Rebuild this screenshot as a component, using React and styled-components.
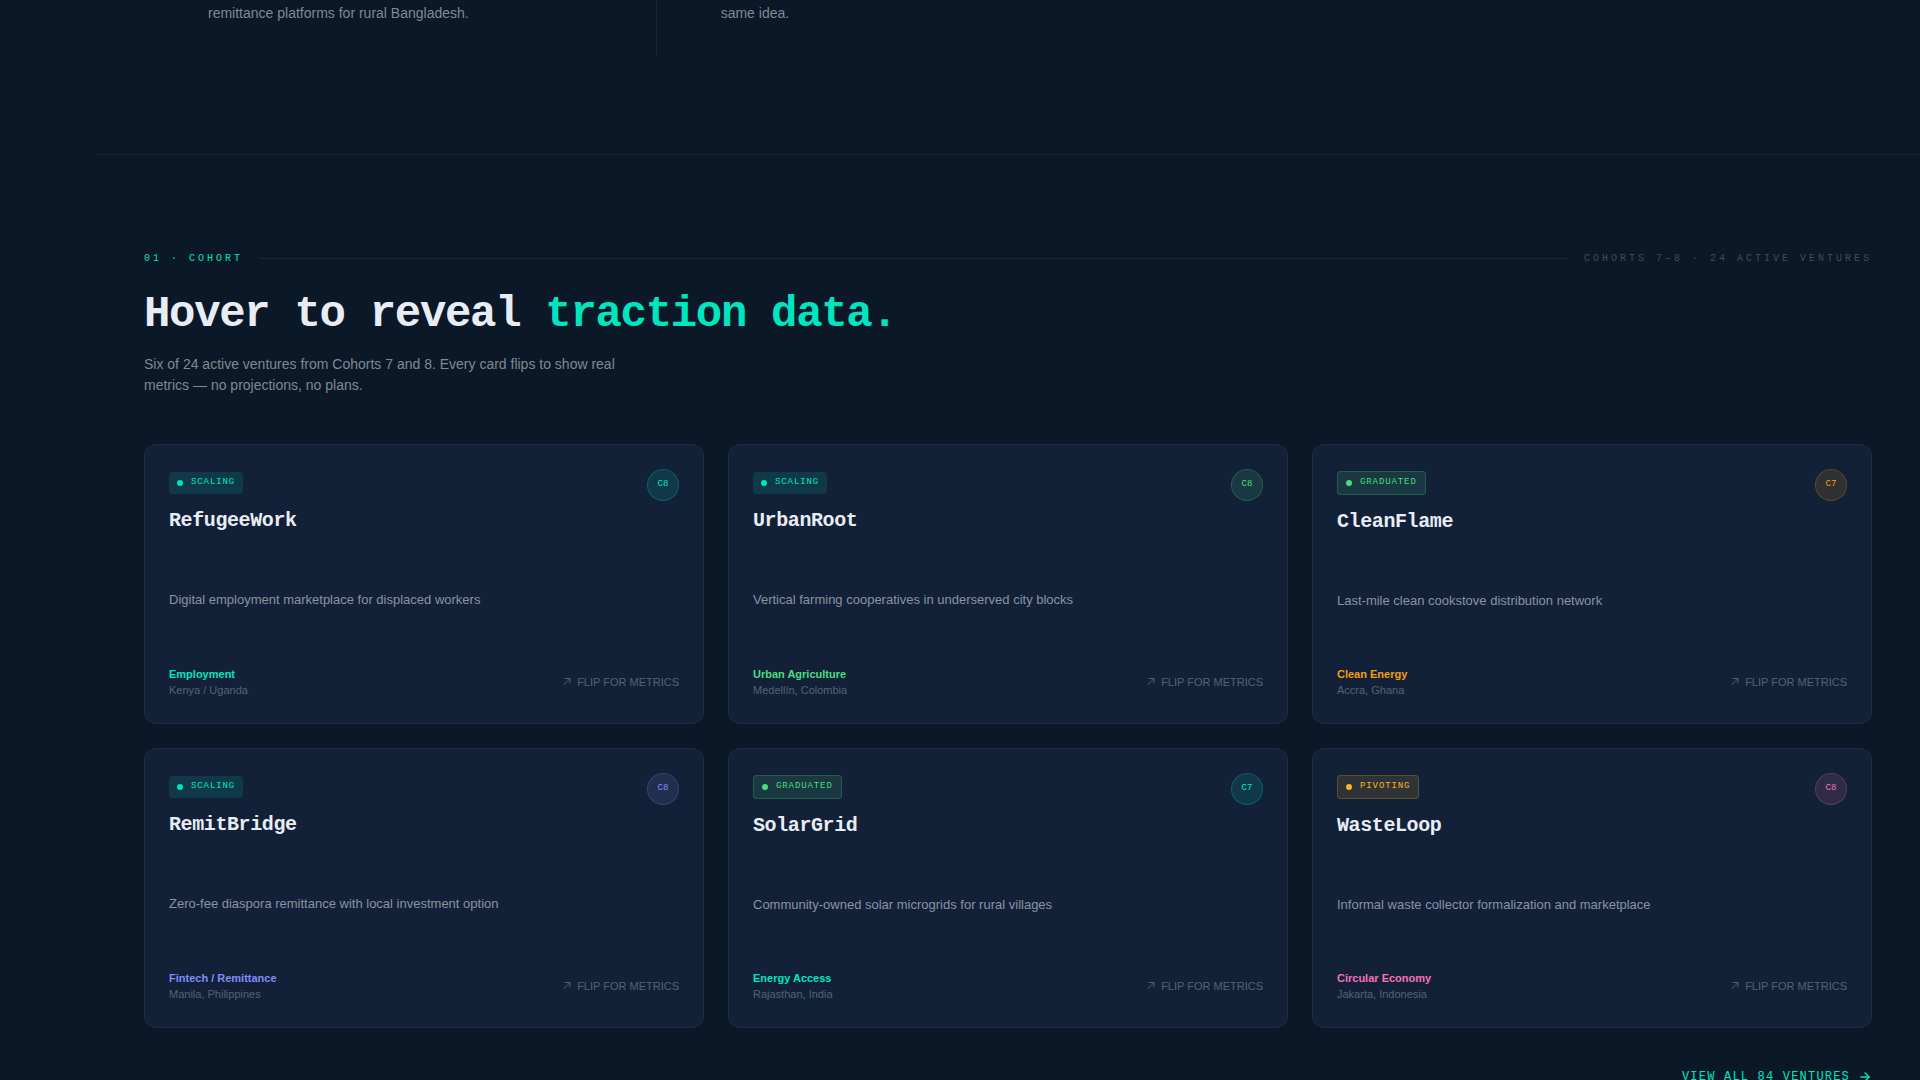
import React from 'react';
import styled, { createGlobalStyle } from 'styled-components';
import { ArrowRight } from 'lucide-react';

const GlobalStyle = createGlobalStyle`
  :root {
    --bg: #0b1827;
    --card: #132138;
    --line: #172431;
    --card-line: #202d43;
    --text: #e8edf5;
    --muted: #7f8996;
    --dim: #556173;
    --faint: #404b5b;
    --teal: #00e5c0;
    --sans: 'Liberation Sans', Arial, sans-serif;
    --mono: 'Liberation Mono', 'Courier New', monospace;
  }

  * {
    box-sizing: border-box;
    margin: 0;
  }

  body {
    background: var(--bg);
    color: var(--text);
    font-family: var(--sans);
  }
`;

const Page = styled.main`
  height: 100vh;
  overflow: hidden;
  padding-left: 96px;
`;

const Ideas = styled.section`
  padding: 0 48px 98px;
`;

const IdeaGrid = styled.div`
  display: grid;
  grid-template-columns: repeat(3, 1fr);
  max-width: 1538px;
`;

const Idea = styled.p`
  padding: 0 64px 30px;
  border-right: 1px solid
    ${({ $divided }) => ($divided ? 'var(--line)' : 'transparent')};
  color: var(--muted);
  font-size: 14px;
  line-height: 26px;
`;

const Cohort = styled.section`
  padding: 96px 48px;
  border-top: 1px solid var(--line);
`;

const Eyebrow = styled.div`
  display: flex;
  align-items: center;
  gap: 16px;
  margin-bottom: 24px;
  font-family: var(--mono);
  font-size: 10px;
  line-height: 15px;
  letter-spacing: 0.3em;
  text-transform: uppercase;
`;

const EyebrowLabel = styled.span`
  color: ${({ $color }) => $color};
`;

const Rule = styled.span`
  flex: 1;
  height: 1px;
  background: #1a2836;
`;

const Title = styled.h2`
  margin-bottom: 16px;
  font-family: var(--mono);
  font-size: 44px;
  line-height: 48px;
  letter-spacing: -0.03em;
`;

const Accent = styled.span`
  color: var(--teal);
`;

const Lead = styled.p`
  max-width: 480px;
  margin-bottom: 48px;
  color: var(--muted);
  font-size: 14px;
  line-height: 21px;
`;

const CardGrid = styled.div`
  display: grid;
  grid-template-columns: repeat(3, 1fr);
  gap: 24px;
`;

const Card = styled.article`
  display: flex;
  flex-direction: column;
  justify-content: space-between;
  min-height: 280px;
  padding: 24px;
  background: var(--card);
  border: 1px solid var(--card-line);
  border-radius: 12px;
`;

const CardTop = styled.header`
  display: flex;
  align-items: flex-start;
  justify-content: space-between;
`;

const Heading = styled.div`
  line-height: 24px;
`;

const Status = styled.span`
  display: inline-flex;
  align-items: center;
  gap: 8px;
  padding: 4px 8px;
  background: ${({ $color }) => $color}1f;
  border: ${({ $color, $bordered }) => ($bordered ? `1px solid ${$color}38` : '0')};
  border-radius: 4px;
  color: ${({ $color }) => $color};
  font-family: var(--mono);
  font-size: 9px;
  line-height: 12px;
  letter-spacing: 0.1em;
  text-transform: uppercase;
`;

const StatusText = styled.span`
  padding-bottom: 2px;
`;

const Dot = styled.span`
  width: 6px;
  height: 6px;
  background: currentColor;
  border-radius: 50%;
`;

const Name = styled.h3`
  margin-top: 14px;
  font-family: var(--mono);
  font-size: 20px;
  line-height: 26px;
  letter-spacing: -0.02em;
`;

const CohortBadge = styled.span`
  display: flex;
  align-items: center;
  justify-content: center;
  width: 32px;
  height: 32px;
  padding-bottom: 2px;
  background: ${({ $color }) => $color}1f;
  border: 1px solid ${({ $color }) => $color}38;
  border-radius: 50%;
  color: ${({ $color }) => $color};
  font-family: var(--mono);
  font-size: 9px;
  line-height: 12px;
`;

const Description = styled.p`
  color: #8a93a2;
  font-size: 13px;
  line-height: 20px;
`;

const CardFooter = styled.footer`
  display: flex;
  align-items: center;
  justify-content: space-between;
  padding-bottom: 1px;
  font-size: 11px;
  line-height: 16px;
`;

const Sector = styled.p`
  color: ${({ $color }) => $color};
  font-weight: 700;
`;

const Place = styled.p`
  color: var(--dim);
`;

const FlipButton = styled.button`
  display: flex;
  align-items: center;
  gap: 6px;
  padding: 0;
  background: none;
  border: 0;
  color: var(--dim);
  font: inherit;
  text-transform: uppercase;
  cursor: pointer;
`;

const More = styled.div`
  display: flex;
  justify-content: flex-end;
  margin-top: 40px;
`;

const MoreLink = styled.a`
  display: flex;
  align-items: center;
  gap: 8px;
  color: var(--teal);
  font-family: var(--mono);
  font-size: 12px;
  line-height: 18px;
  letter-spacing: 0.1em;
  text-decoration: none;
  text-transform: uppercase;
`;

const statuses = {
  Scaling: { color: '#00e5c0', bordered: false },
  Graduated: { color: '#4ade80', bordered: true },
  Pivoting: { color: '#fbb424', bordered: true },
};

const ventures = [
  {
    name: 'RefugeeWork',
    status: 'Scaling',
    cohort: 'C8',
    color: '#00e5c0',
    description: 'Digital employment marketplace for displaced workers',
    sector: 'Employment',
    place: 'Kenya / Uganda',
  },
  {
    name: 'UrbanRoot',
    status: 'Scaling',
    cohort: 'C8',
    color: '#4ade80',
    description: 'Vertical farming cooperatives in underserved city blocks',
    sector: 'Urban Agriculture',
    place: 'Medellín, Colombia',
  },
  {
    name: 'CleanFlame',
    status: 'Graduated',
    cohort: 'C7',
    color: '#f59e0b',
    description: 'Last-mile clean cookstove distribution network',
    sector: 'Clean Energy',
    place: 'Accra, Ghana',
  },
  {
    name: 'RemitBridge',
    status: 'Scaling',
    cohort: 'C8',
    color: '#818cf8',
    description: 'Zero-fee diaspora remittance with local investment option',
    sector: 'Fintech / Remittance',
    place: 'Manila, Philippines',
  },
  {
    name: 'SolarGrid',
    status: 'Graduated',
    cohort: 'C7',
    color: '#00e5c0',
    description: 'Community-owned solar microgrids for rural villages',
    sector: 'Energy Access',
    place: 'Rajasthan, India',
  },
  {
    name: 'WasteLoop',
    status: 'Pivoting',
    cohort: 'C8',
    color: '#f472b6',
    description: 'Informal waste collector formalization and marketplace',
    sector: 'Circular Economy',
    place: 'Jakarta, Indonesia',
  },
];

function FlipIcon() {
  return (
    <svg width="8" height="8" viewBox="0 0 8 8" fill="none" aria-hidden="true">
      <path d="M.5 7 7 .5M2 .5h5v5" stroke="currentColor" />
    </svg>
  );
}

function VentureCard({ venture }) {
  const status = statuses[venture.status];

  return (
    <Card>
      <CardTop>
        <Heading>
          <Status $color={status.color} $bordered={status.bordered}>
            <Dot />
            <StatusText>{venture.status}</StatusText>
          </Status>
          <Name>{venture.name}</Name>
        </Heading>
        <CohortBadge $color={venture.color}>{venture.cohort}</CohortBadge>
      </CardTop>
      <Description>{venture.description}</Description>
      <CardFooter>
        <div>
          <Sector $color={venture.color}>{venture.sector}</Sector>
          <Place>{venture.place}</Place>
        </div>
        <FlipButton type="button">
          <FlipIcon />
          Flip for metrics
        </FlipButton>
      </CardFooter>
    </Card>
  );
}

function App() {
  return (
    <>
      <GlobalStyle />
      <Page>
        <Ideas>
          <IdeaGrid>
            <Idea $divided>remittance platforms for rural Bangladesh.</Idea>
            <Idea>same idea.</Idea>
          </IdeaGrid>
        </Ideas>
        <Cohort>
          <Eyebrow>
            <EyebrowLabel $color="var(--teal)">01 · Cohort</EyebrowLabel>
            <Rule />
            <EyebrowLabel $color="var(--faint)">
              Cohorts 7–8 · 24 active ventures
            </EyebrowLabel>
          </Eyebrow>
          <Title>
            Hover to reveal <Accent>traction data.</Accent>
          </Title>
          <Lead>
            Six of 24 active ventures from Cohorts 7 and 8. Every card flips to
            show real metrics — no projections, no plans.
          </Lead>
          <CardGrid>
            {ventures.map((venture) => (
              <VentureCard key={venture.name} venture={venture} />
            ))}
          </CardGrid>
          <More>
            <MoreLink href="#ventures">
              View all 84 ventures
              <ArrowRight size={14} strokeWidth={2.5} />
            </MoreLink>
          </More>
        </Cohort>
      </Page>
    </>
  );
}

export default App;
